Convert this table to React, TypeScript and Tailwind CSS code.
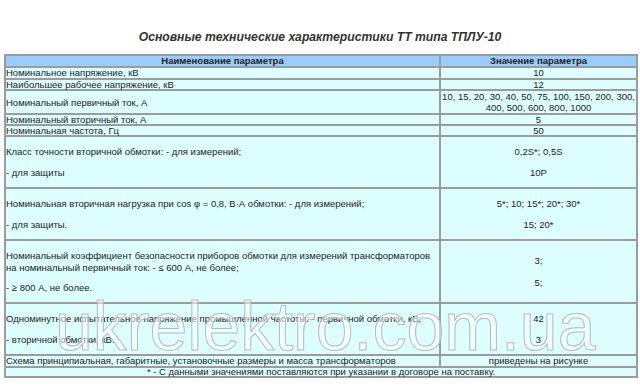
import React from "react";

const td = "border-2 border-[#9c9c9c] p-0 align-middle";

export default function App() {
  return (
    <div
      className="w-[640px] h-[387px] bg-white relative overflow-hidden text-[#222]"
      style={{ fontFamily: '"Liberation Sans", Arial, sans-serif' }}
    >
      <div className="pt-[30px] h-[54px] text-center text-[12.2px] leading-[14px] font-bold italic text-[#333]">
        Основные технические характеристики ТТ типа ТПЛУ-10
      </div>
      <div className="px-[4px]">
        <table className="w-[632px] border-collapse border-2 border-[#808080] bg-[#ddffff] text-[9.5px] table-fixed">
          <colgroup>
            <col className="w-[435px]" />
            <col className="w-[197px]" />
          </colgroup>
          <tbody>
            <tr className="bg-[#99ccff]">
              <td className={`${td} text-center font-bold leading-[10px]`}>Наименование параметра</td>
              <td className={`${td} text-center font-bold leading-[10px]`}>Значение параметра</td>
            </tr>
            <tr>
              <td className={`${td} leading-[10px]`}>Номинальное напряжение, кВ</td>
              <td className={`${td} text-center leading-[10px]`}>10</td>
            </tr>
            <tr>
              <td className={`${td} leading-[9px]`}>Наибольшее рабочее напряжение, кВ</td>
              <td className={`${td} text-center leading-[9px]`}>12</td>
            </tr>
            <tr>
              <td className={`${td} leading-[11px]`}>Номинальный первичный ток, А</td>
              <td className={`${td} text-center leading-[11px]`}>
                10, 15, 20, 30, 40, 50, 75, 100, 150, 200, 300,
                <br />
                400, 500, 600, 800, 1000
              </td>
            </tr>
            <tr>
              <td className={`${td} leading-[9px]`}>Номинальный вторичный ток, А</td>
              <td className={`${td} text-center leading-[9px]`}>5</td>
            </tr>
            <tr>
              <td className={`${td} leading-[9px]`}>Номинальная частота, Гц</td>
              <td className={`${td} text-center leading-[9px]`}>50</td>
            </tr>
            <tr>
              <td className={`${td} leading-[11px]`}>
                <div className="flex flex-col gap-[10px] py-[9px]">
                  <div>Класс точности вторичной обмотки: - для измерений;</div>
                  <div>- для защиты</div>
                </div>
              </td>
              <td className={`${td} text-center leading-[11px]`}>
                <div className="flex flex-col gap-[10px] py-[9px]">
                  <div>0,2S*; 0,5S</div>
                  <div>10P</div>
                </div>
              </td>
            </tr>
            <tr>
              <td className={`${td} leading-[11px]`}>
                <div className="flex flex-col gap-[10px] py-[9px]">
                  <div>Номинальная вторичная нагрузка при cos φ = 0,8, В·А обмотки: - для измерений;</div>
                  <div>- для защиты.</div>
                </div>
              </td>
              <td className={`${td} text-center leading-[11px]`}>
                <div className="flex flex-col gap-[10px] py-[9px]">
                  <div>5*; 10; 15*; 20*; 30*</div>
                  <div>15; 20*</div>
                </div>
              </td>
            </tr>
            <tr>
              <td className={`${td} leading-[11px]`}>
                <div className="flex flex-col gap-[8px] py-[9px]">
                  <div className="leading-[12px]">
                    Номинальный коэффициент безопасности приборов обмотки для измерений трансформаторов
                    <br />
                    на номинальный первичный ток: - ≤ 600 А, не более;
                  </div>
                  <div>- ≥ 800 А, не более.</div>
                </div>
              </td>
              <td className={`${td} text-center leading-[11px]`}>
                <div className="flex flex-col gap-[11px]">
                  <div>3;</div>
                  <div>5;</div>
                </div>
              </td>
            </tr>
            <tr>
              <td className={`${td} leading-[11px]`}>
                <div className="flex flex-col gap-[10px] py-[9px]">
                  <div>Одноминутное испытательное напряжение промышленной частоты: - первичной обмотки, кВ;</div>
                  <div>- вторичной обмотки, кВ.</div>
                </div>
              </td>
              <td className={`${td} text-center leading-[11px]`}>
                <div className="flex flex-col gap-[10px] py-[9px]">
                  <div>42</div>
                  <div>3</div>
                </div>
              </td>
            </tr>
            <tr>
              <td className={`${td} leading-[10px]`}>
                Схема принципиальная, габаритные, установочные размеры и масса трансформаторов
              </td>
              <td className={`${td} text-center leading-[10px]`}>приведены на рисунке</td>
            </tr>
            <tr>
              <td colSpan={2} className={`${td} text-center leading-[8px]`}>
                * - С данными значениями поставляются при указании в договоре на поставку.
              </td>
            </tr>
          </tbody>
        </table>
      </div>
      <div
        className="absolute left-[55px] top-[292px] text-[68px] leading-none text-white/50 whitespace-nowrap pointer-events-none [-webkit-text-stroke:1px_#b9b9b9]"
        style={{ fontFamily: '"Liberation Sans", Arial, sans-serif' }}
      >
        ukrelektro.com.ua
      </div>
    </div>
  );
}
